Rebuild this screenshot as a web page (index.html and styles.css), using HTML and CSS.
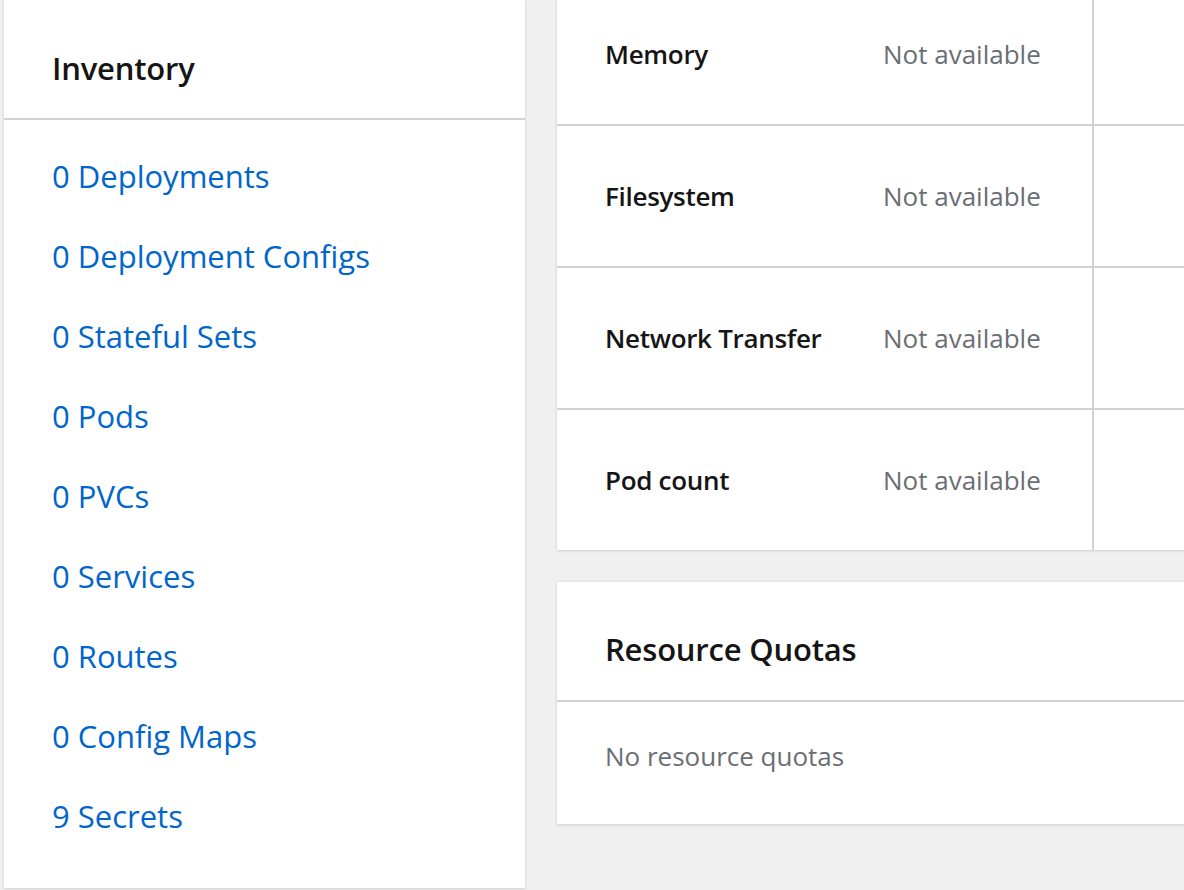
FILE: index.html
```html
<!DOCTYPE html>
<html lang="en">
<head>
<meta charset="utf-8">
<title>Project overview</title>
<link rel="stylesheet" href="styles.css">
</head>
<body>
<div class="page">
  <section class="card inventory">
    <h2 class="card-title inv-title">Inventory</h2>
    <ul class="inv-list">
      <li><a href="#">0 Deployments</a></li>
      <li><a href="#">0 Deployment Configs</a></li>
      <li><a href="#">0 Stateful Sets</a></li>
      <li><a href="#">0 Pods</a></li>
      <li><a href="#">0 PVCs</a></li>
      <li><a href="#">0 Services</a></li>
      <li><a href="#">0 Routes</a></li>
      <li><a href="#">0 Config Maps</a></li>
      <li><a href="#">9 Secrets</a></li>
    </ul>
  </section>
  <div class="right-col">
    <section class="card util">
      <div class="util-row">
        <div class="util-info"><span class="util-label">Memory</span><span class="util-value">Not available</span></div>
        <div class="util-chart"></div>
      </div>
      <div class="util-row">
        <div class="util-info"><span class="util-label">Filesystem</span><span class="util-value">Not available</span></div>
        <div class="util-chart"></div>
      </div>
      <div class="util-row">
        <div class="util-info"><span class="util-label">Network Transfer</span><span class="util-value">Not available</span></div>
        <div class="util-chart"></div>
      </div>
      <div class="util-row">
        <div class="util-info"><span class="util-label">Pod count</span><span class="util-value">Not available</span></div>
        <div class="util-chart"></div>
      </div>
    </section>
    <section class="card quotas">
      <h2 class="card-title quota-title">Resource Quotas</h2>
      <div class="quota-body">No resource quotas</div>
    </section>
  </div>
</div>
</body>
</html>
```

FILE: styles.css
```css
html, body {
  margin: 0;
  padding: 0;
  background: #f0f0f0;
  overflow: hidden;
  height: 890px;
}

body {
  font-family: "Open Sans", "Liberation Sans", sans-serif;
  color: #151515;
}

.page {
  display: grid;
  grid-template-columns: 521px 900px;
  column-gap: 32px;
  align-items: start;
  padding-left: 4px;
}

.card {
  background: #ffffff;
  box-shadow: 0 1px 3px rgba(3, 3, 3, 0.12), 0 0 2px rgba(3, 3, 3, 0.06);
}

.card-title {
  margin: 0;
  font-size: 31px;
  line-height: 40px;
  font-weight: 600;
  letter-spacing: -0.2px;
  color: #151515;
  padding-left: 48px;
  border-bottom: 2px solid #d2d2d2;
}

.inventory {
  height: 888px;
  box-sizing: border-box;
}

.inv-title {
  padding-top: 48px;
  padding-bottom: 30px;
}

.inv-list {
  list-style: none;
  margin: 0;
  padding: 16px 0 32px 48px;
}

.inv-list li {
  font-size: 31px;
  line-height: 80px;
}

.inv-list a {
  color: #0066cc;
  text-decoration: none;
}

.right-col {
  display: flex;
  flex-direction: column;
  gap: 32px;
  margin-top: -16px;
}

.util-row {
  display: flex;
  height: 140px;
  border-bottom: 2px solid #d2d2d2;
}

.util-row:last-child {
  border-bottom: none;
}

.util-info {
  width: 537px;
  flex: none;
  display: flex;
  align-items: center;
  padding-left: 48px;
  box-sizing: border-box;
  border-right: 2px solid #d2d2d2;
  font-size: 26px;
  line-height: 36px;
}

.util-label {
  width: 278px;
  flex: none;
  font-weight: 600;
  letter-spacing: -0.3px;
  color: #151515;
}

.util-value {
  color: #6a6e73;
}

.util-chart {
  flex: 1;
}

.quota-title {
  padding-top: 47px;
  padding-bottom: 31px;
}

.quota-body {
  padding: 36px 0 50px 48px;
  font-size: 26px;
  line-height: 36px;
  color: #6a6e73;
}
```
